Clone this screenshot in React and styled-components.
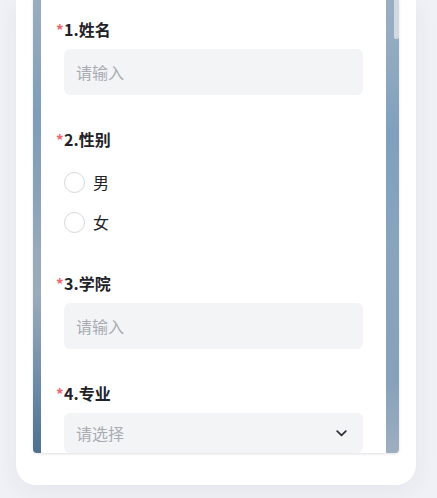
import React from "react";
import styled, { createGlobalStyle } from "styled-components";

const GlobalStyle = createGlobalStyle`
  html, body {
    margin: 0;
    padding: 0;
    background: #f0f1f6;
    font-family: "Noto Sans CJK SC", "Noto Sans", sans-serif;
    overflow: hidden;
  }
  * { box-sizing: border-box; }
`;

const Page = styled.div`
  width: 437px;
  height: 498px;
  padding: 0 21px 0 16px;
  background: #f0f1f6;
`;

const Card = styled.div`
  width: 400px;
  background: #ffffff;
  border-radius: 0 0 20px 20px;
  padding: 0 17px 32px;
  box-shadow: 0 6px 24px rgba(40, 50, 80, 0.06);
`;

const Panel = styled.div`
  display: flex;
  height: 453px;
  overflow: hidden;
  border-radius: 0 0 4px 4px;
  box-shadow: 0 1px 3px rgba(0, 0, 0, 0.12);
  background:
    linear-gradient(180deg, #9aacbf 0%, #8ea6bc 11%, #7d9db8 25%, #8aa2b9 44%, #97a9ba 55%, #9aabbb 65%, #7f98b0 77%, #6585a2 88%, #4d7191 100%) left / 50% 100% no-repeat,
    linear-gradient(180deg, #9aaec2 0%, #91aac1 13%, #7fa0bd 29%, #84a3bd 44%, #89a5be 55%, #88a3bc 66%, #86a2bb 84%, #93a8bd 93%, #9eaec0 100%) right / 50% 100% no-repeat;
`;

const Content = styled.div`
  flex: 1;
  padding: 0 8px;
  min-width: 0;
`;

const Sheet = styled.div`
  background: #ffffff;
  height: 100%;
  padding: 19px 23px 0;
  display: flex;
  flex-direction: column;
  gap: 34px;
`;

const ScrollTrack = styled.div`
  width: 5px;
  flex: none;
`;

const Thumb = styled.div`
  height: 39px;
  background: rgba(214, 220, 229, 0.92);
  border-radius: 0 0 2px 2px;
`;

const Question = styled.div`
  display: flex;
  flex-direction: column;
`;

const Label = styled.div`
  display: flex;
  align-items: flex-start;
  margin-left: -8px;
  margin-bottom: 10px;
  height: 20px;
  line-height: 20px;
  font-size: 16px;
  font-weight: 700;
  color: #1f2329;
`;

const Star = styled.span`
  width: 8px;
  font-size: 15px;
  line-height: 22px;
  height: 20px;
  color: #f0646a;
  font-weight: 700;
`;

const Input = styled.input`
  height: 46px;
  width: 100%;
  border: none;
  outline: none;
  border-radius: 6px;
  background: #f3f4f6;
  padding: 0 12px;
  font-family: inherit;
  font-size: 16px;
  color: #1f2329;
  &::placeholder {
    color: #a8abb2;
  }
`;

const Select = styled.div`
  height: 40px;
  border-radius: 6px;
  background: #f3f4f6;
  padding: 0 16px 0 12px;
  display: flex;
  align-items: center;
  justify-content: space-between;
  font-size: 16px;
  color: #a8abb2;
`;

const RadioGroup = styled.div`
  display: flex;
  flex-direction: column;
  margin: 3px 0 -3px;
`;

const RadioRow = styled.label`
  height: 40px;
  display: flex;
  align-items: center;
  gap: 8px;
  font-size: 16px;
  color: #1f2329;
`;

const Circle = styled.span`
  width: 21px;
  height: 21px;
  border-radius: 50%;
  border: 1px solid #d3d6dc;
  background: #fff;
  flex: none;
`;

const Chevron = () => (
  <svg width="11" height="7" viewBox="0 0 11 7" fill="none">
    <path d="M1.2 1.2L5.5 5.4L9.8 1.2" stroke="#2b2f36" strokeWidth="1.7" strokeLinecap="round" strokeLinejoin="round" />
  </svg>
);

const QLabel = ({ children }) => (
  <Label>
    <Star>*</Star>
    {children}
  </Label>
);

export default function App() {
  return (
    <>
      <GlobalStyle />
      <Page>
        <Card>
          <Panel>
            <Content>
              <Sheet>
                <Question>
                  <QLabel>1.姓名</QLabel>
                  <Input placeholder="请输入" />
                </Question>
                <Question>
                  <QLabel>2.性别</QLabel>
                  <RadioGroup>
                    <RadioRow>
                      <Circle />
                      男
                    </RadioRow>
                    <RadioRow>
                      <Circle />
                      女
                    </RadioRow>
                  </RadioGroup>
                </Question>
                <Question>
                  <QLabel>3.学院</QLabel>
                  <Input placeholder="请输入" />
                </Question>
                <Question>
                  <QLabel>4.专业</QLabel>
                  <Select>
                    <span>请选择</span>
                    <Chevron />
                  </Select>
                </Question>
              </Sheet>
            </Content>
            <ScrollTrack>
              <Thumb />
            </ScrollTrack>
          </Panel>
        </Card>
      </Page>
    </>
  );
}
